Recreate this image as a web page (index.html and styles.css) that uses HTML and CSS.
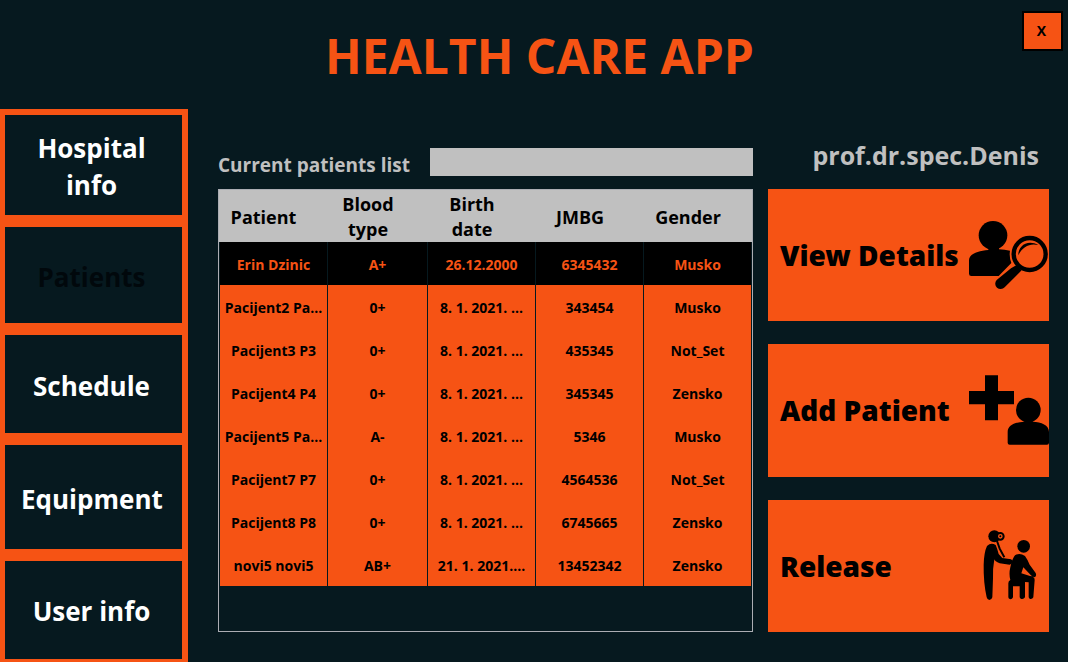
FILE: index.html
```html
<!DOCTYPE html>
<html lang="en">
<head>
<meta charset="utf-8">
<title>Health Care App</title>
<link rel="stylesheet" href="styles.css">
</head>
<body>
<div class="app">
  <header class="header">
    <h1 class="title">HEALTH CARE APP</h1>
    <button class="close" type="button">X</button>
  </header>

  <nav class="sidebar">
    <button class="nav-item nav-hospital" type="button">Hospital info</button>
    <button class="nav-item nav-patients" type="button" disabled>Patients</button>
    <button class="nav-item nav-schedule" type="button">Schedule</button>
    <button class="nav-item nav-equipment" type="button">Equipment</button>
    <button class="nav-item nav-user" type="button">User info</button>
  </nav>

  <main class="content">
    <div class="search">
      <label class="search-label" for="search">Current patients list</label>
      <input class="search-input" id="search" type="text">
    </div>
    <div class="user">prof.dr.spec.Denis</div>

    <div class="table-panel">
      <table class="patients">
        <colgroup><col class="col-patient"><col class="col-blood"><col><col><col></colgroup>
        <thead>
          <tr><th>Patient</th><th>Blood type</th><th>Birth date</th><th>JMBG</th><th>Gender</th></tr>
        </thead>
        <tbody>
          <tr class="selected"><td>Erin Dzinic</td><td>A+</td><td>26.12.2000</td><td>6345432</td><td>Musko</td></tr>
          <tr><td>Pacijent2 Pa...</td><td>0+</td><td>8. 1. 2021. ...</td><td>343454</td><td>Musko</td></tr>
          <tr><td>Pacijent3 P3</td><td>0+</td><td>8. 1. 2021. ...</td><td>435345</td><td>Not_Set</td></tr>
          <tr><td>Pacijent4 P4</td><td>0+</td><td>8. 1. 2021. ...</td><td>345345</td><td>Zensko</td></tr>
          <tr><td>Pacijent5 Pa...</td><td>A-</td><td>8. 1. 2021. ...</td><td>5346</td><td>Musko</td></tr>
          <tr><td>Pacijent7 P7</td><td>0+</td><td>8. 1. 2021. ...</td><td>4564536</td><td>Not_Set</td></tr>
          <tr><td>Pacijent8 P8</td><td>0+</td><td>8. 1. 2021. ...</td><td>6745665</td><td>Zensko</td></tr>
          <tr><td>novi5 novi5</td><td>AB+</td><td>21. 1. 2021....</td><td>13452342</td><td>Zensko</td></tr>
        </tbody>
      </table>
    </div>

    <div class="actions">
      <button class="action" type="button">
        <span>View Details</span>
        <svg class="action-icon" viewBox="27 15 240 240" aria-hidden="true">
          <circle cx="99" cy="76" r="43"/>
          <path d="M85 112V120C54 123 27 131 27 151V191Q27 198 34 198H116L154 159Q147 142 150 122Q134 119 117 118V112Z"/>
          <path d="M153 175L110 210A16 16 0 0 0 134 232L185 181L170 165Z"/>
          <circle cx="209" cy="132" r="48" fill="none" stroke="currentColor" stroke-width="13"/>
          <path d="M175 136C174 107 203 87 235 105C211 99 188 108 175 136Z"/>
        </svg>
      </button>
      <button class="action" type="button">
        <span>Add Patient</span>
        <svg class="action-icon" viewBox="27 27 240 240" aria-hidden="true">
          <path d="M75 43H114V90H162V130H114V178H75V130H27V90H75Z"/>
          <circle cx="205" cy="147" r="37"/>
          <path d="M193 178V182C164 184 143 192 143 213V245Q143 251 149 251H261Q267 251 267 245V213C267 192 244 183 218 182V178Z"/>
        </svg>
      </button>
      <button class="action" type="button">
        <span>Release</span>
        <svg class="action-icon" viewBox="27 33 240 240" aria-hidden="true">
          <circle cx="103" cy="64" r="18"/>
          <circle cx="121" cy="64" r="10" class="scope"/>
          <circle cx="121" cy="64" r="3" class="scope-dot"/>
          <path d="M81 93Q93 81 107 90Q112 101 116 117L127 129L153 133Q162 138 157 145L149 149L119 145Q104 139 103 133Q98 160 99 190L97 247Q95 255 88 255Q82 255 80 247Q70 201 71 149Q72 112 81 93Z"/>
          <path d="M111 78L119 101L133 127" fill="none" stroke="currentColor" stroke-width="6"/>
          <circle cx="191" cy="94" r="19"/>
          <path d="M165 121Q179 112 195 123Q203 134 209 149L227 174Q231 184 223 187Q217 186 212 180L190 157L184 175L210 183Q224 184 224 195L220 247Q217 253 211 252Q206 251 206 246V202L195 201V247Q190 255 182 251L179 247V214H159V247Q157 253 151 253Q145 252 145 247V205Q145 197 151 195Q146 177 151 157Q156 132 165 121Z"/>
        </svg>
      </button>
    </div>
  </main>
</div>
</body>
</html>
```
FILE: styles.css
```css
* {
  box-sizing: border-box;
}

body {
  margin: 0;
  background: #06191f;
  color: #c0c0c0;
  font-family: "Open Sans", "Noto Sans", sans-serif;
  font-weight: 700;
}

button {
  font: inherit;
  cursor: pointer;
}

.app {
  display: grid;
  grid-template-columns: 188px 1fr;
  grid-template-rows: 109px 1fr;
  min-height: 100vh;
}

.header {
  grid-column: 1 / -1;
  display: grid;
  grid-template-columns: 1fr auto 1fr;
  align-items: start;
  padding: 11px 5px 0 16px;
}

.title {
  grid-column: 2;
  margin: 12px 0 0;
  color: #f65314;
  font-size: 48px;
  line-height: 66px;
}

.close {
  justify-self: end;
  width: 41px;
  height: 40px;
  padding: 0 2px 2px 0;
  border: 2px solid #000;
  background: #f65314;
  color: #000;
  font-size: 14px;
}

.sidebar {
  display: flex;
  flex-direction: column;
  gap: 12px;
  padding: 6px 6px 3px 5px;
  background: #f65314;
}

.nav-item {
  padding: 4px 20px 0 16px;
  border: 0;
  background: #06191f;
  color: #fff;
  font-size: 26px;
  line-height: 37px;
}

.nav-item:disabled {
  color: #01080c;
}

.nav-hospital { flex: 100 0 0; }
.nav-patients { flex: 96 0 0; }
.nav-schedule { flex: 98 0 0; }
.nav-equipment { flex: 104 0 0; }
.nav-user { flex: 98 0 0; }

.content {
  display: grid;
  grid-template-columns: 535fr 281fr;
  grid-template-rows: 80px 1fr;
  column-gap: 15px;
  padding: 0 19px 30px 30px;
}

.search {
  display: flex;
  align-items: start;
  gap: 20px;
  padding-top: 39px;
}

.search-label {
  font-size: 19px;
  line-height: 34px;
}

.search-input {
  flex: 1;
  min-width: 0;
  height: 28px;
  padding: 0 6px;
  border: 0;
  border-radius: 0;
  background: #c0c0c0;
  font: inherit;
}

.user {
  padding: 28px 10px 0 0;
  font-size: 25px;
  line-height: 36px;
  text-align: right;
  white-space: nowrap;
}

.table-panel {
  border: 1px solid #abadb3;
}

.patients {
  width: 100%;
  table-layout: fixed;
  border-collapse: separate;
  border-spacing: 0;
  color: #000;
  text-align: center;
}

.col-patient {
  width: 109px;
}

.col-blood {
  width: 100px;
}

.patients th {
  height: 52px;
  padding: 2px 20px 0 0;
  background: #c0c0c0;
  font-size: 18px;
  line-height: 25px;
}

.patients td {
  height: 43px;
  padding: 2px 0 0;
  border-right: 1px solid #06191f;
  background: #f65314;
  font-size: 14px;
  line-height: 20px;
  white-space: nowrap;
}

.patients td:first-child {
  border-left: 1px solid #06191f;
}

.patients .selected td {
  background: #000;
  color: #f65314;
}

.actions {
  display: grid;
  grid-template-rows: repeat(3, 1fr);
  gap: 23px;
}

.action {
  display: flex;
  align-items: center;
  justify-content: space-between;
  padding: 0 0 0 12px;
  border: 0;
  background: #f65314;
  color: #000;
  font-family: "Noto Sans", "Open Sans", sans-serif;
  font-size: 28px;
  font-weight: 900;
  line-height: 40px;
  white-space: nowrap;
}

.action-icon {
  flex: none;
  width: 80px;
  height: 80px;
  fill: currentColor;
}

.scope {
  fill: #f65314;
  stroke: #000;
  stroke-width: 6px;
}

.scope-dot {
  fill: #000;
}
```
